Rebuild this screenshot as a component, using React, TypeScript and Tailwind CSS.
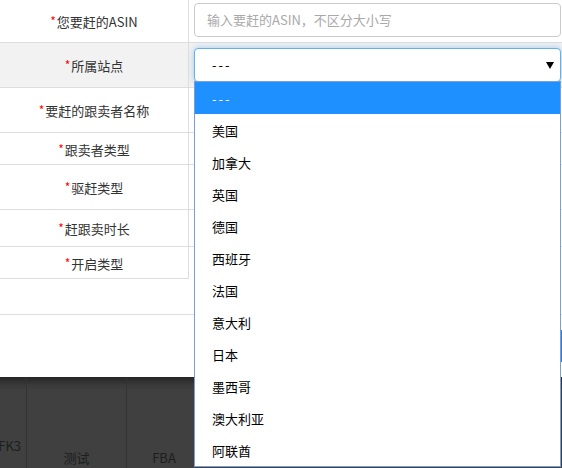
import React from "react";

const font = { fontFamily: '"Noto Sans CJK SC", "Noto Sans", sans-serif' };

function Label({ text }: { text: string }) {
  return (
    <span className="text-[13px] text-[#333] relative top-[1px]">
      <span className="text-[#f00] text-[12px] relative top-[-1px] mr-[1px]">*</span>
      {text}
    </span>
  );
}

function Row({
  h,
  label,
  gray,
  children,
  rightBorder = true,
}: {
  h: string;
  label: string;
  gray?: boolean;
  children?: React.ReactNode;
  rightBorder?: boolean;
}) {
  return (
    <div className={`flex ${h} ${gray ? "bg-[#f2f2f2]" : "bg-white"}`}>
      <div className="w-[189px] shrink-0 border-r border-b border-[#dddddd] flex items-center justify-center">
        <Label text={label} />
      </div>
      <div className={`flex-1 pl-[5px] pr-[1px] ${rightBorder ? "border-b border-[#dddddd]" : ""}`}>{children}</div>
    </div>
  );
}

const options = ["---", "美国", "加拿大", "英国", "德国", "西班牙", "法国", "意大利", "日本", "墨西哥", "澳大利亚", "阿联酋"];

export default function App() {
  return (
    <div className="relative w-[562px] h-[468px] overflow-hidden bg-[#404040]" style={font}>
      {/* modal */}
      <div className="h-[377px] bg-white flex flex-col">
        <Row h="h-[43px]" label="您要赶的ASIN">
          <div className="mt-[3px] h-[34px] w-[367px] border border-[#cccccc] rounded-[4px] flex items-center pl-[12px] text-[13px] text-[#a9a9a9]">
            输入要赶的ASIN，不区分大小写
          </div>
        </Row>
        <Row h="h-[45px]" label="所属站点" gray>
          <div className="mt-[5px] h-[34px] w-[367px] bg-white border border-[#66afe9] rounded-[4px] shadow-[0_0_6px_rgba(102,175,233,0.6)] flex items-center justify-between pl-[17px] pr-[6px] text-[13px] text-black">
            <span className="tracking-[2px]">---</span>
            <svg width="8" height="7" viewBox="0 0 8 7">
              <polygon points="0,0 8,0 4,7" fill="#000" />
            </svg>
          </div>
        </Row>
        <Row h="h-[45px]" label="要赶的跟卖者名称" />
        <Row h="h-[32px]" label="跟卖者类型" />
        <Row h="h-[45px]" label="驱赶类型" />
        <Row h="h-[37px]" label="赶跟卖时长" />
        <Row h="h-[32px]" label="开启类型" rightBorder={false} />
        <div className="h-[36px] border-b border-[#dddddd]" />
        <div className="flex-1 flex justify-end items-start pt-[15px]">
          <div className="w-[70px] h-[32px] bg-[#3a7bc8]" />
        </div>
      </div>

      {/* dimmed table behind */}
      <div className="h-[91px] flex bg-[linear-gradient(to_bottom,#262626,#3a3a3a_8px,#404040_14px)] text-[13px] text-[#1e1e1e]">
        <div className="w-[27px] border-r border-[#333333] flex items-end justify-end pb-[13px] pr-[5px]">FK3</div>
        <div className="w-[100px] border-r border-[#333333] flex items-end justify-center pb-[1px]">测试</div>
        <div className="w-[75px] border-r border-[#333333] flex items-end justify-center pb-[1px]">FBA</div>
      </div>

      {/* dropdown list */}
      <div className="absolute left-[194px] top-[81px] w-[367px] border border-[#7a9fd6] bg-white">
        {options.map((o, i) => (
          <div
            key={o}
            className={`h-[32px] flex items-center pl-[17px] pt-[1px] text-[13px] ${
              i === 0 ? "bg-[#1e90ff] text-white tracking-[2px]" : "text-black"
            }`}
          >
            {o}
          </div>
        ))}
      </div>
    </div>
  );
}
